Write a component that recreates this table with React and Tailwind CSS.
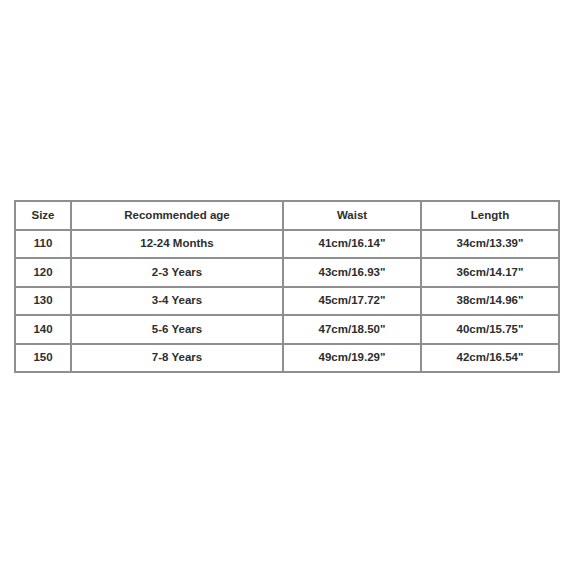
import React from "react";

const rows = [
  ["110", "12-24 Months", '41cm/16.14"', '34cm/13.39"'],
  ["120", "2-3 Years", '43cm/16.93"', '36cm/14.17"'],
  ["130", "3-4 Years", '45cm/17.72"', '38cm/14.96"'],
  ["140", "5-6 Years", '47cm/18.50"', '40cm/15.75"'],
  ["150", "7-8 Years", '49cm/19.29"', '42cm/16.54"'],
];

const cell = "border-2 border-[#8f8f8f] h-[28.5px] p-0 text-center align-middle";

export default function App() {
  return (
    <div
      className="w-[573px] h-[573px] bg-white pt-[200px] pl-[14px] text-[11.5px] font-bold text-[#2e2e2e]"
      style={{ fontFamily: '"Liberation Sans", Arial, sans-serif' }}
    >
      <table className="w-[544px] border-collapse table-fixed">
        <colgroup>
          <col className="w-[56px]" />
          <col className="w-[212px]" />
          <col className="w-[138px]" />
          <col className="w-[138px]" />
        </colgroup>
        <thead>
          <tr>
            <th className={cell}>Size</th>
            <th className={cell}>Recommended age</th>
            <th className={cell}>Waist</th>
            <th className={cell}>Length</th>
          </tr>
        </thead>
        <tbody>
          {rows.map((r) => (
            <tr key={r[0]}>
              {r.map((v, i) => (
                <td key={i} className={cell}>
                  {v}
                </td>
              ))}
            </tr>
          ))}
        </tbody>
      </table>
    </div>
  );
}
